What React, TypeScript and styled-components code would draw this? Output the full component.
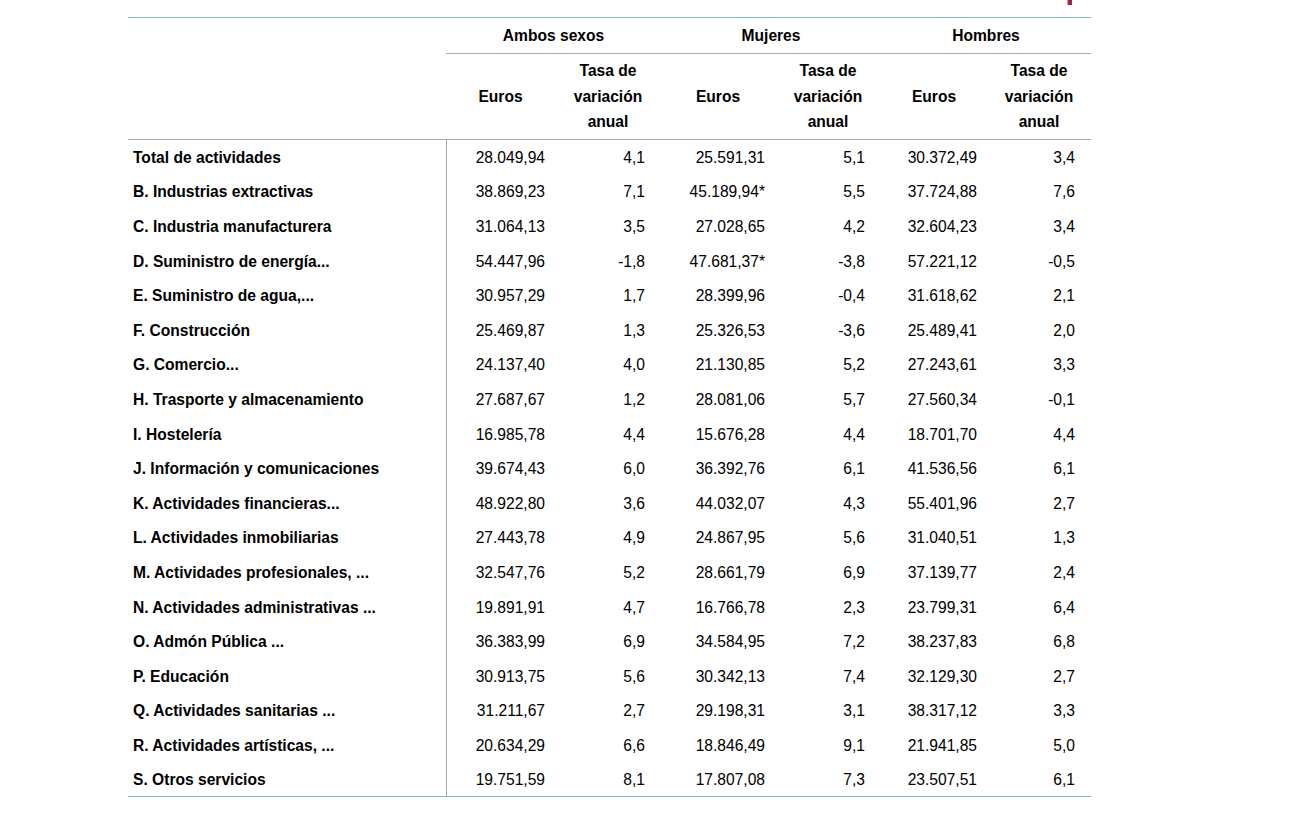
import styled, { createGlobalStyle } from "styled-components";

const GlobalStyle = createGlobalStyle`
  body {
    margin: 0;
    background: #ffffff;
    font-family: "Liberation Sans", Arial, sans-serif;
    color: #000000;
  }
`;

const Page = styled.div`
  width: 963px;
  margin-left: 128px;
`;

const TopBar = styled.div`
  height: 17px;
  display: flex;
  justify-content: flex-end;
  padding-right: 19px;
`;

const Mark = styled.div`
  width: 4px;
  height: 5px;
  background: #a3214a;
  box-shadow: -1px 0 0 #e8a060;
`;

const Table = styled.table`
  width: 963px;
  border-collapse: collapse;
  table-layout: fixed;
  border-top: 1px solid #80c0bf;
  border-bottom: 1px solid #80c0bf;
  font-size: 15.6px;
`;

const GroupHead = styled.th`
  height: 35px;
  padding: 0;
  font-weight: bold;
  text-align: center;
  vertical-align: middle;
  border-bottom: 1px solid #ababab;
`;

const SubHead = styled.th<{ $rate?: boolean }>`
  height: 85px;
  padding: ${(p) => (p.$rate ? "0 17px" : "0")};
  font-weight: bold;
  text-align: center;
  vertical-align: middle;
  line-height: 25.5px;
  border-bottom: 1px solid #ababab;
`;

const BlankHead = styled.th`
  padding: 0;
  border-bottom: 1px solid #ababab;
`;

const Row = styled.tr`
  height: 34.6px;
`;

const Label = styled.td`
  padding: 2px 0 0 5px;
  font-weight: bold;
  white-space: nowrap;
  border-right: 1px solid #ababab;
  vertical-align: middle;
`;

const Num = styled.td<{ $rate?: boolean }>`
  padding: ${(p) => (p.$rate ? "2px 16px 0 0" : "2px 10px 0 0")};
  text-align: right;
  white-space: nowrap;
  vertical-align: middle;
`;

type Line = [string, string, string, string, string, string, string];

const rows: Line[] = [
  ["Total de actividades", "28.049,94", "4,1", "25.591,31", "5,1", "30.372,49", "3,4"],
  ["B. Industrias extractivas", "38.869,23", "7,1", "45.189,94*", "5,5", "37.724,88", "7,6"],
  ["C. Industria manufacturera", "31.064,13", "3,5", "27.028,65", "4,2", "32.604,23", "3,4"],
  ["D. Suministro de energía...", "54.447,96", "-1,8", "47.681,37*", "-3,8", "57.221,12", "-0,5"],
  ["E. Suministro de agua,...", "30.957,29", "1,7", "28.399,96", "-0,4", "31.618,62", "2,1"],
  ["F. Construcción", "25.469,87", "1,3", "25.326,53", "-3,6", "25.489,41", "2,0"],
  ["G. Comercio...", "24.137,40", "4,0", "21.130,85", "5,2", "27.243,61", "3,3"],
  ["H. Trasporte y almacenamiento", "27.687,67", "1,2", "28.081,06", "5,7", "27.560,34", "-0,1"],
  ["I. Hostelería", "16.985,78", "4,4", "15.676,28", "4,4", "18.701,70", "4,4"],
  ["J. Información y comunicaciones", "39.674,43", "6,0", "36.392,76", "6,1", "41.536,56", "6,1"],
  ["K. Actividades financieras...", "48.922,80", "3,6", "44.032,07", "4,3", "55.401,96", "2,7"],
  ["L. Actividades inmobiliarias", "27.443,78", "4,9", "24.867,95", "5,6", "31.040,51", "1,3"],
  ["M. Actividades profesionales, ...", "32.547,76", "5,2", "28.661,79", "6,9", "37.139,77", "2,4"],
  ["N. Actividades administrativas ...", "19.891,91", "4,7", "16.766,78", "2,3", "23.799,31", "6,4"],
  ["O. Admón Pública ...", "36.383,99", "6,9", "34.584,95", "7,2", "38.237,83", "6,8"],
  ["P. Educación", "30.913,75", "5,6", "30.342,13", "7,4", "32.129,30", "2,7"],
  ["Q. Actividades sanitarias ...", "31.211,67", "2,7", "29.198,31", "3,1", "38.317,12", "3,3"],
  ["R. Actividades artísticas, ...", "20.634,29", "6,6", "18.846,49", "9,1", "21.941,85", "5,0"],
  ["S. Otros servicios", "19.751,59", "8,1", "17.807,08", "7,3", "23.507,51", "6,1"],
];

const groups = ["Ambos sexos", "Mujeres", "Hombres"];
const widths = [318, 109, 106, 114, 106, 106, 104];

function App() {
  return (
    <Page>
      <GlobalStyle />
      <TopBar>
        <Mark />
      </TopBar>
      <Table>
        <colgroup>
          {widths.map((w, i) => (
            <col key={i} style={{ width: w }} />
          ))}
        </colgroup>
        <thead>
          <tr>
            <BlankHead rowSpan={2} />
            {groups.map((g) => (
              <GroupHead key={g} colSpan={2}>
                {g}
              </GroupHead>
            ))}
          </tr>
          <tr>
            {groups.map((g) => [
              <SubHead key={g + "e"}>Euros</SubHead>,
              <SubHead key={g + "t"} $rate>
                Tasa de variación anual
              </SubHead>,
            ])}
          </tr>
        </thead>
        <tbody>
          {rows.map((r) => (
            <Row key={r[0]}>
              <Label>{r[0]}</Label>
              <Num>{r[1]}</Num>
              <Num $rate>{r[2]}</Num>
              <Num>{r[3]}</Num>
              <Num $rate>{r[4]}</Num>
              <Num>{r[5]}</Num>
              <Num $rate>{r[6]}</Num>
            </Row>
          ))}
        </tbody>
      </Table>
    </Page>
  );
}

export default App;
